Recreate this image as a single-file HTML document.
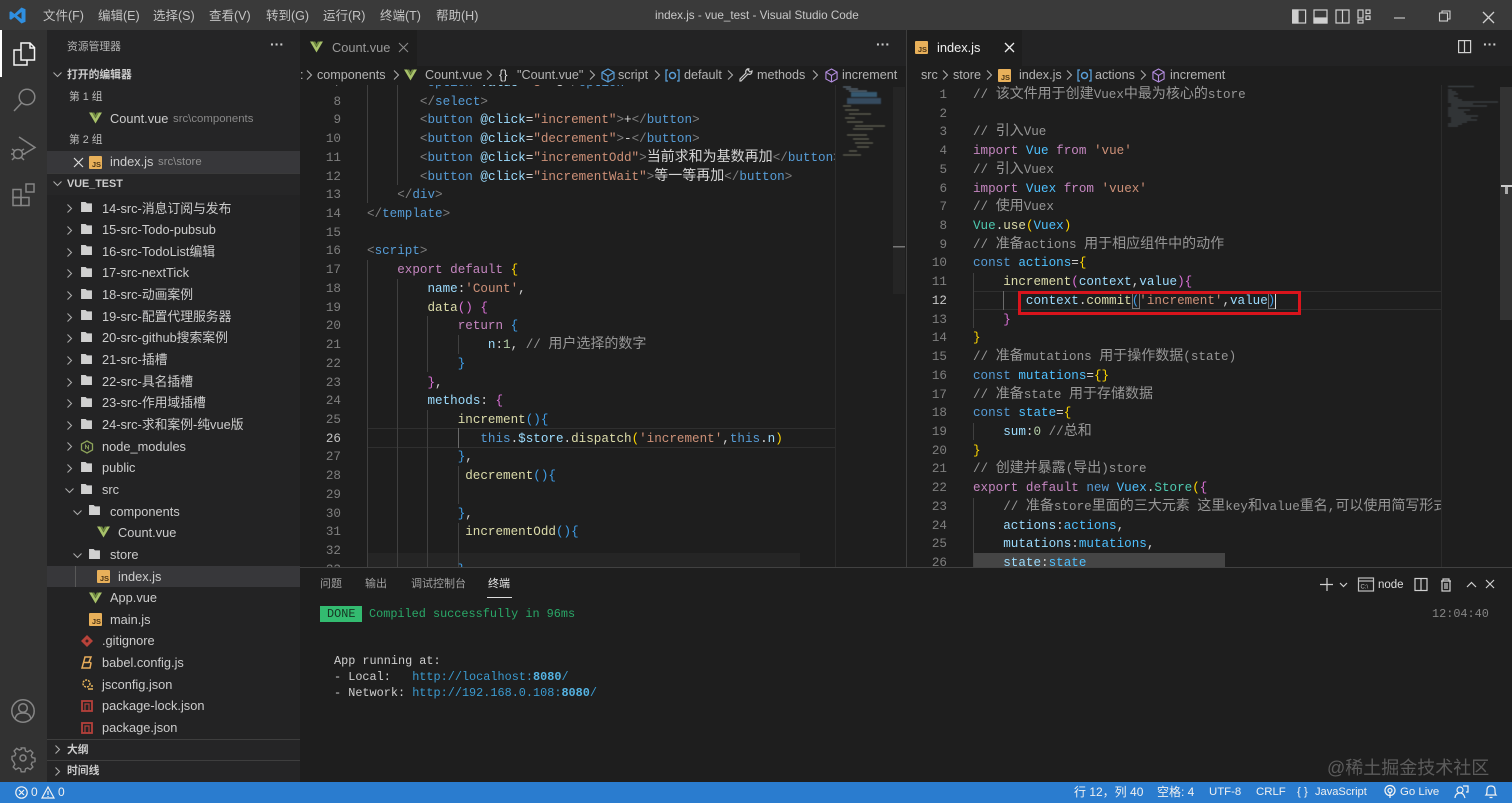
<!DOCTYPE html>
<html lang="zh-CN"><head><meta charset="utf-8"><title>index.js - vue_test - Visual Studio Code</title>
<style>
*{box-sizing:border-box;margin:0;padding:0}
html,body{width:1512px;height:803px;overflow:hidden;background:#1e1e1e}
body{position:relative;font-family:"Liberation Sans","Noto Sans CJK SC",sans-serif;color:#ccc;filter:blur(.3px)}
.a{position:absolute}
.t{position:absolute;white-space:pre;height:20px;line-height:20px;font-size:12.8px}
svg.i{position:absolute;overflow:visible}
.ic{fill:none;stroke:#858585;stroke-width:1.5}
.js{position:absolute;width:13px;height:13px;background:#e8b05a;border-radius:1px;color:#4b3415;font:bold 7.5px/17px "Liberation Sans",sans-serif;text-align:right;padding-right:1px;overflow:hidden}
.m{font-size:12.5px;color:#c4c4c4;top:6px}
.ti{color:#c8c8c8}
.code{position:absolute;overflow:hidden;font-family:"Liberation Mono","Noto Sans CJK SC",monospace;font-size:12.6px;line-height:18.72px;color:#d4d4d4}
.code div{height:18.72px;white-space:pre}
.code i{font-style:normal;font-size:14px;line-height:1px;font-family:"Noto Sans CJK SC",sans-serif}
.nums{position:absolute;font-family:"Liberation Mono",monospace;font-size:12.6px;line-height:18.72px;text-align:right;color:#7f7f7f;white-space:pre;overflow:hidden}
.g{color:#808080}.b{color:#569cd6}.at{color:#9cdcfe}.s{color:#ce9178}.k{color:#c586c0}.f{color:#dcdcaa}.c{color:#979797}.n{color:#b5cea8}.y{color:#ffd700}.p{color:#da70d6}.u{color:#3f9ee8}.v{color:#4ec9b0}.w{color:#d4d4d4}.cv{color:#4fc1ff}
.gd{position:absolute;width:1px;background:#404040}
.cr{position:absolute;fill:none;stroke:#aaa;stroke-width:1.1;overflow:visible}
.bc{color:#b4b4b4;top:65px;font-size:12.6px}
.st{top:782px;color:#f0f0f0;font-size:11.4px;line-height:21px;height:21px}
.pt{top:574px;font-size:11px;color:#a0a0a0}
.tm{position:absolute;font-family:"Liberation Mono",monospace;font-size:11.85px;line-height:16px;white-space:pre;color:#cfcfcf}
</style></head><body>
<svg width="0" height="0" style="position:absolute"><defs>
<symbol id="vue" viewBox="0 0 14 13"><path d="M0 .5h3.4L7 7l3.6-6.5H14L7 12.5z" fill="#a8c26a"/><path d="M3.6.5h2L7 3.2 8.4.5h2L7 6.6z" fill="#6f8b3e"/></symbol>
<symbol id="fo" viewBox="0 0 12 11"><path d="M0 0h5L6.500 1.500H12V11H0z" fill="#d0d0d0"/></symbol>
<symbol id="cube" viewBox="0 0 14 16"><path d="M7 1l6 3.3v7.4L7 15l-6-3.3V4.3zM1 4.3L7 8l6-3.7M7 8v7" fill="none" stroke="#b48ee0" stroke-width="1.2"/></symbol>
<symbol id="cb" viewBox="0 0 15 13"><path d="M3 1H1v11h2M12 1h2v11h-2" fill="none" stroke="#5a9fd8" stroke-width="1.3"/><circle cx="7.5" cy="6.5" r="3" fill="none" stroke="#5a9fd8" stroke-width="1.5"/></symbol>
</defs></svg>

<!-- title bar -->
<div class="a" style="left:0;top:0;width:1512px;height:30px;background:#3a3a3a"></div>
<svg class="i" style="left:9px;top:7px" width="17" height="17" viewBox="0 0 17 17"><path d="M12.5 0.5L16.5 2.3V14.7L12.5 16.5 5.5 10 2 12.8 .5 12V5L2 4.2 5.5 7zM12.5 5L8 8.5l4.5 3.5z" fill="#2f8fe0" fill-rule="evenodd"/></svg>
<div class="t m" style="left:43px">文件(F)</div><div class="t m" style="left:98px">编辑(E)</div><div class="t m" style="left:153px">选择(S)</div><div class="t m" style="left:209px">查看(V)</div><div class="t m" style="left:266px">转到(G)</div><div class="t m" style="left:323px">运行(R)</div><div class="t m" style="left:380px">终端(T)</div><div class="t m" style="left:436px">帮助(H)</div>
<div class="t ti" style="left:655px;top:6px;font-size:11.7px">index.js - vue_test - Visual Studio Code</div>
<svg class="i" style="left:1292px;top:9px" width="80" height="15" fill="none" stroke="#cfcfcf" stroke-width="1.2"><rect x=".6" y="1" width="13" height="13"/><rect x="1" y="1" width="5" height="13" fill="#cfcfcf"/><rect x="22" y="1" width="13" height="13"/><rect x="22" y="9" width="13" height="5" fill="#cfcfcf"/><rect x="44" y="1" width="13" height="13"/><path d="M50.5 1v13"/><rect x="66" y="1" width="5" height="8"/><rect x="74" y="1" width="4" height="3.5"/><rect x="74" y="7" width="4" height="3.5"/><rect x="66" y="11" width="5" height="3"/></svg>
<svg class="i" style="left:1394px;top:10px" width="100" height="14" fill="none" stroke="#d0d0d0" stroke-width="1.1"><path d="M0 8h11"/><rect x="45.5" y="3" width="8" height="8"/><path d="M48 3V1h8v8h-2.500"/><path d="M89 2l11 11M100 2L89 13" stroke-width="1.3"/></svg>

<!-- activity bar -->
<div class="a" style="left:0;top:30px;width:47px;height:752px;background:#323232"></div>
<div class="a" style="left:0;top:30px;width:2px;height:47px;background:#fff"></div>
<svg class="i" style="left:12px;top:42px" width="24" height="24" fill="none" stroke="#f5f5f5" stroke-width="1.500"><path d="M9 1h9l4.500 4.500V18H9zM18 1v5h4.500"/><path d="M9 8H2v15h13v-5"/></svg>
<svg class="i ic" style="left:12px;top:88px" width="24" height="24"><circle cx="15" cy="9" r="7.800"/><path d="M10 14.500L2 23"/></svg>
<svg class="i ic" style="left:11px;top:135px" width="26" height="26"><path d="M8 2l16 10.500L13 19"/><circle cx="7" cy="19" r="4.500"/><path d="M1 14l3 2M13 14l-3 2M0 19h2.500M12 19h2.500M1 25l3-3M13 25l-3-3"/></svg>
<svg class="i ic" style="left:12px;top:183px" width="24" height="24"><rect x="1" y="6.500" width="8" height="8"/><rect x="1" y="14.500" width="8" height="8"/><rect x="9" y="14.500" width="8" height="8"/><rect x="14" y="1" width="8" height="8"/></svg>
<svg class="i ic" style="left:11px;top:699px" width="24" height="24"><circle cx="12" cy="12" r="11.200"/><circle cx="12" cy="9" r="4.300"/><path d="M4 20c1-5 4-6 8-6s7 1 8 6"/></svg>
<svg class="i ic" style="left:11px;top:746px" width="24" height="24"><circle cx="12" cy="12" r="3"/><path d="M10 1h4l.7 3.300 2.300 1 2.900-1.800 2.800 2.800-1.800 2.900 1 2.300 3.100.7v3.600l-3.100.7-1 2.300 1.800 2.900-2.800 2.800-2.900-1.800-2.300 1-.7 3.300h-4l-.7-3.300-2.300-1-2.900 1.800-2.800-2.800 1.800-2.900-1-2.300L0 13.800v-3.600l3.100-.7 1-2.300L2.300 4.300 5.100 1.500 8 3.300l2.300-1z" transform="translate(1 1) scale(.92)"/></svg>

<!-- sidebar -->
<div class="a" style="left:47px;top:30px;width:253px;height:752px;background:#232324"></div>
<div class="a" style="left:47px;top:30px;width:253px;height:143px;background:#252526"></div>
<div class="t" style="left:67px;top:37px;font-size:10.8px;color:#b5b5b5">资源管理器</div>
<div class="t" style="left:270px;top:34px;font-size:14px;color:#ccc;font-weight:bold">···</div>
<svg class="cr" style="left:53px;top:72px" width="9" height="6"><path d="M.5.500l4 4 4-4"/></svg>
<div class="t" style="left:67px;top:65px;font-size:10.8px;font-weight:bold;color:#ccc">打开的编辑器</div>
<div class="t" style="left:69px;top:87px;font-size:10.8px;color:#bbb">第 1 组</div>
<svg class="i" style="left:89px;top:112px" width="13" height="12"><use href="#vue"/></svg>
<div class="t" style="left:110px;top:109px">Count.vue</div><div class="t" style="left:173px;top:109px;font-size:11.4px;color:#888">src\components</div>
<div class="t" style="left:69px;top:130px;font-size:10.8px;color:#bbb">第 2 组</div>
<div class="a" style="left:47px;top:151px;width:253px;height:22px;background:#37373a"></div>
<svg class="i" style="left:74px;top:158px" width="9" height="9" stroke="#ddd" stroke-width="1.200"><path d="M0 0l9 9M9 0L0 9"/></svg>
<span class="js" style="left:89px;top:156px">JS</span>
<div class="t" style="left:110px;top:152px">index.js</div><div class="t" style="left:158px;top:152px;font-size:11.4px;color:#8f8f8f">src\store</div>
<div class="a" style="left:47px;top:173px;width:253px;height:22px;background:#262627;border-top:1px solid #3a3a3a"></div>
<svg class="cr" style="left:53px;top:181px" width="9" height="6"><path d="M.5.500l4 4 4-4"/></svg>
<div class="t" style="left:67px;top:174px;font-size:10.8px;font-weight:bold;color:#ccc">VUE_TEST</div>

<svg class="cr" style="left:67px;top:204px" width="6" height="9"><path d="M.5.500l4 4-4 4"/></svg><svg class="i" style="left:81px;top:202px" width="11" height="10"><use href="#fo"/></svg><div class="t" style="left:102px;top:199px">14-src-消息订阅与发布</div>
<svg class="cr" style="left:67px;top:226px" width="6" height="9"><path d="M.5.500l4 4-4 4"/></svg><svg class="i" style="left:81px;top:224px" width="11" height="10"><use href="#fo"/></svg><div class="t" style="left:102px;top:220px">15-src-Todo-pubsub</div>
<svg class="cr" style="left:67px;top:248px" width="6" height="9"><path d="M.5.500l4 4-4 4"/></svg><svg class="i" style="left:81px;top:245px" width="11" height="10"><use href="#fo"/></svg><div class="t" style="left:102px;top:242px">16-src-TodoList编辑</div>
<svg class="cr" style="left:67px;top:269px" width="6" height="9"><path d="M.5.500l4 4-4 4"/></svg><svg class="i" style="left:81px;top:267px" width="11" height="10"><use href="#fo"/></svg><div class="t" style="left:102px;top:263px">17-src-nextTick</div>
<svg class="cr" style="left:67px;top:291px" width="6" height="9"><path d="M.5.500l4 4-4 4"/></svg><svg class="i" style="left:81px;top:289px" width="11" height="10"><use href="#fo"/></svg><div class="t" style="left:102px;top:285px">18-src-动画案例</div>
<svg class="cr" style="left:67px;top:313px" width="6" height="9"><path d="M.5.500l4 4-4 4"/></svg><svg class="i" style="left:81px;top:310px" width="11" height="10"><use href="#fo"/></svg><div class="t" style="left:102px;top:307px">19-src-配置代理服务器</div>
<svg class="cr" style="left:67px;top:334px" width="6" height="9"><path d="M.5.500l4 4-4 4"/></svg><svg class="i" style="left:81px;top:332px" width="11" height="10"><use href="#fo"/></svg><div class="t" style="left:102px;top:328px">20-src-github搜索案例</div>
<svg class="cr" style="left:67px;top:356px" width="6" height="9"><path d="M.5.500l4 4-4 4"/></svg><svg class="i" style="left:81px;top:354px" width="11" height="10"><use href="#fo"/></svg><div class="t" style="left:102px;top:350px">21-src-插槽</div>
<svg class="cr" style="left:67px;top:378px" width="6" height="9"><path d="M.5.500l4 4-4 4"/></svg><svg class="i" style="left:81px;top:375px" width="11" height="10"><use href="#fo"/></svg><div class="t" style="left:102px;top:372px">22-src-具名插槽</div>
<svg class="cr" style="left:67px;top:399px" width="6" height="9"><path d="M.5.500l4 4-4 4"/></svg><svg class="i" style="left:81px;top:397px" width="11" height="10"><use href="#fo"/></svg><div class="t" style="left:102px;top:393px">23-src-作用域插槽</div>
<svg class="cr" style="left:67px;top:421px" width="6" height="9"><path d="M.5.500l4 4-4 4"/></svg><svg class="i" style="left:81px;top:419px" width="11" height="10"><use href="#fo"/></svg><div class="t" style="left:102px;top:415px">24-src-求和案例-纯vue版</div>
<svg class="cr" style="left:67px;top:442px" width="6" height="9"><path d="M.5.500l4 4-4 4"/></svg><svg class="i" style="left:81px;top:440px" width="12" height="13" fill="none" stroke="#8da35a" stroke-width="1.300"><path d="M6 1l5.500 3v6L6 13 .5 10V4z"/><path d="M4.500 9V5l3 4V5" stroke-width=".9"/></svg><div class="t" style="left:102px;top:437px">node_modules</div>
<svg class="cr" style="left:67px;top:464px" width="6" height="9"><path d="M.5.500l4 4-4 4"/></svg><svg class="i" style="left:81px;top:462px" width="11" height="10"><use href="#fo"/></svg><div class="t" style="left:102px;top:458px">public</div>
<svg class="cr" style="left:65px;top:488px" width="9" height="6"><path d="M.5.500l4 4 4-4"/></svg><svg class="i" style="left:81px;top:484px" width="11" height="10"><use href="#fo"/></svg><div class="t" style="left:102px;top:480px">src</div>
<svg class="cr" style="left:73px;top:510px" width="9" height="6"><path d="M.5.500l4 4 4-4"/></svg><svg class="i" style="left:89px;top:505px" width="11" height="10"><use href="#fo"/></svg><div class="t" style="left:110px;top:502px">components</div>
<svg class="i" style="left:97px;top:526px" width="13" height="12"><use href="#vue"/></svg><div class="t" style="left:118px;top:523px">Count.vue</div>
<svg class="cr" style="left:73px;top:553px" width="9" height="6"><path d="M.5.500l4 4 4-4"/></svg><svg class="i" style="left:89px;top:549px" width="11" height="10"><use href="#fo"/></svg><div class="t" style="left:110px;top:545px">store</div>
<div class="a" style="left:47px;top:566px;width:253px;height:21px;background:#37373a"></div>
<div class="gd" style="left:75px;top:566px;height:21px;background:#585858"></div>
<span class="js" style="left:97px;top:570px">JS</span><div class="t" style="left:118px;top:567px">index.js</div>
<svg class="i" style="left:89px;top:592px" width="13" height="12"><use href="#vue"/></svg><div class="t" style="left:110px;top:588px">App.vue</div>
<span class="js" style="left:89px;top:613px">JS</span><div class="t" style="left:110px;top:610px">main.js</div>
<svg class="i" style="left:81px;top:635px" width="12" height="12"><path d="M6 0l6 6-6 6-6-6z" fill="#b8433a"/><circle cx="6" cy="6" r="1.500" fill="#3a2020"/></svg><div class="t" style="left:102px;top:631px">.gitignore</div>
<svg class="i" style="left:81px;top:656px" width="12" height="14" fill="none" stroke="#e8ad5b" stroke-width="1.500"><path d="M4 1h6L8 6l2 1-1 5H1zM2.500 6.500H8"/></svg><div class="t" style="left:102px;top:653px">babel.config.js</div>
<svg class="i" style="left:81px;top:678px" width="13" height="13" fill="none" stroke="#e8b65c" stroke-width="1.500"><circle cx="5.500" cy="5.500" r="3.500" stroke-dasharray="2 1"/><path d="M7 11h5M10 8h2"/></svg><div class="t" style="left:102px;top:675px">jsconfig.json</div>
<svg class="i" style="left:81px;top:700px" width="12" height="12" fill="none" stroke="#b5403b" stroke-width="1.800"><rect x="1" y="1" width="10" height="10"/><path d="M4 11V4h4v7" stroke-width="1.200"/></svg><div class="t" style="left:102px;top:696px">package-lock.json</div>
<svg class="i" style="left:81px;top:722px" width="12" height="12" fill="none" stroke="#b5403b" stroke-width="1.800"><rect x="1" y="1" width="10" height="10"/><path d="M4 11V4h4v7" stroke-width="1.200"/></svg><div class="t" style="left:102px;top:718px">package.json</div>
<div class="a" style="left:47px;top:739px;width:253px;height:22px;background:#252526;border-top:1px solid #3e3e3e"></div>
<div class="a" style="left:47px;top:760px;width:253px;height:22px;background:#252526;border-top:1px solid #3e3e3e"></div>
<svg class="cr" style="left:55px;top:745px" width="6" height="9"><path d="M.5.500l4 4-4 4"/></svg><div class="t" style="left:67px;top:740px;font-size:10.8px;font-weight:bold">大纲</div>
<svg class="cr" style="left:55px;top:767px" width="6" height="9"><path d="M.5.500l4 4-4 4"/></svg><div class="t" style="left:67px;top:761px;font-size:10.8px;font-weight:bold">时间线</div>

<!-- left editor -->
<div class="a" style="left:300px;top:30px;width:606px;height:537px;background:#1e1e1e"></div>
<div class="a" style="left:300px;top:30px;width:606px;height:36px;background:#232324"></div>
<div class="a" style="left:300px;top:30px;width:117px;height:36px;background:#1e1e1e"></div>
<svg class="i" style="left:310px;top:41px" width="13" height="12"><use href="#vue"/></svg>
<div class="t" style="left:332px;top:38px;color:#9a9a9a">Count.vue</div>
<svg class="i" style="left:399px;top:43px" width="9" height="9" stroke="#8a8a8a" stroke-width="1.100"><path d="M0 0l9 9M9 0L0 9"/></svg>
<div class="t" style="left:876px;top:34px;font-size:14px;font-weight:bold;color:#ccc">···</div>
<div class="nums" style="left:300px;top:85px;width:41px;height:482px"><div style="margin-top:-11px">7
8
9
10
11
12
13
14
15
16
17
18
19
20
21
22
23
24
25
<span style="color:#c6c6c6">26</span>
27
28
29
30
31
32
33</div></div>
<div class="a" style="left:367px;top:428px;width:468px;height:20px;border-top:1px solid #2f2f2f;border-bottom:1px solid #2f2f2f"></div>
<div class="a" style="left:367px;top:553px;width:433px;height:14px;background:#252525"></div>
<div class="gd" style="left:367px;top:85px;height:118px"></div><div class="gd" style="left:397px;top:85px;height:100px"></div>
<div class="gd" style="left:367px;top:260px;height:307px"></div><div class="gd" style="left:397px;top:279px;height:288px"></div><div class="gd" style="left:427px;top:316px;height:56px"></div><div class="gd" style="left:458px;top:335px;height:19px"></div><div class="gd" style="left:427px;top:410px;height:157px"></div><div class="gd" style="left:458px;top:428px;height:20px;background:#6a6a6a"></div><div class="gd" style="left:458px;top:466px;height:38px"></div><div class="gd" style="left:458px;top:523px;height:44px"></div>
<div class="code" style="left:367px;top:85px;width:468px;height:482px"><div style="margin-top:-11px"><span class="g">       &lt;</span><span class="b">option</span> <span class="at">value</span>=<span class="s">"3"</span><span class="g">&gt;</span>3<span class="g">&lt;/</span><span class="b">option</span><span class="g">&gt;</span></div>
<div><span class="g">       &lt;/</span><span class="b">select</span><span class="g">&gt;</span></div>
<div><span class="g">       &lt;</span><span class="b">button</span> <span class="at">@click</span>=<span class="s">"increment"</span><span class="g">&gt;</span>+<span class="g">&lt;/</span><span class="b">button</span><span class="g">&gt;</span></div>
<div><span class="g">       &lt;</span><span class="b">button</span> <span class="at">@click</span>=<span class="s">"decrement"</span><span class="g">&gt;</span>-<span class="g">&lt;/</span><span class="b">button</span><span class="g">&gt;</span></div>
<div><span class="g">       &lt;</span><span class="b">button</span> <span class="at">@click</span>=<span class="s">"incrementOdd"</span><span class="g">&gt;</span><i>当前求和为基数再加</i><span class="g">&lt;/</span><span class="b">button</span><span class="g">&gt;</span></div>
<div><span class="g">       &lt;</span><span class="b">button</span> <span class="at">@click</span>=<span class="s">"incrementWait"</span><span class="g">&gt;</span><i>等一等再加</i><span class="g">&lt;/</span><span class="b">button</span><span class="g">&gt;</span></div>
<div><span class="g">    &lt;/</span><span class="b">div</span><span class="g">&gt;</span></div>
<div><span class="g">&lt;/</span><span class="b">template</span><span class="g">&gt;</span></div>
<div> </div>
<div><span class="g">&lt;</span><span class="b">script</span><span class="g">&gt;</span></div>
<div>    <span class="k">export default</span> <span class="y">{</span></div>
<div>        <span class="at">name</span>:<span class="s">'Count'</span>,</div>
<div>        <span class="f">data</span><span class="p">()</span> <span class="p">{</span></div>
<div>            <span class="k">return</span> <span class="u">{</span></div>
<div>                <span class="at">n</span>:<span class="n">1</span>, <span class="c">// <i>用户选择的数字</i></span></div>
<div>            <span class="u">}</span></div>
<div>        <span class="p">}</span>,</div>
<div>        <span class="at">methods</span>: <span class="p">{</span></div>
<div>            <span class="f">increment</span><span class="u">(){</span></div>
<div>               <span class="b">this</span>.<span class="at">$store</span>.<span class="f">dispatch</span><span class="y">(</span><span class="s">'increment'</span>,<span class="b">this</span>.<span class="at">n</span><span class="y">)</span></div>
<div>            <span class="u">}</span>,</div>
<div>             <span class="f">decrement</span><span class="u">(){</span></div>
<div> </div>
<div>            <span class="u">}</span>,</div>
<div>             <span class="f">incrementOdd</span><span class="u">(){</span></div>
<div> </div>
<div>            <span class="u">}</span>,</div></div>
<!-- left minimap -->
<svg class="i" style="left:835px;top:85px" width="71" height="482"><rect x="0" y="0" width="1" height="482" fill="#2b2b2b"/><g opacity=".75" style="filter:blur(.5px)"><path d="M8 2h8M11 4h12M14 6h18" stroke="#7f9ab0" stroke-width="1"/><rect x="16" y="7" width="26" height="5" fill="#3e6c8c"/><rect x="12" y="13" width="34" height="6" fill="#3f5a75"/><path d="M8 21h8M10 25h14M14 29h22M10 33h10M12 37h16M20 41h30M18 44h20M12 50h20M18 54h16M20 58h18M22 62h12M14 66h8M8 70h18" stroke="#8e8f76" stroke-width="1"/></g><rect x="58" y="2" width="12" height="207" fill="#252525"/><rect x="58" y="161" width="12" height="1.500" fill="#777"/></svg>

<!-- right editor -->
<div class="a" style="left:906px;top:30px;width:1px;height:537px;background:#3d3d3d"></div>
<div class="a" style="left:907px;top:30px;width:605px;height:537px;background:#1e1e1e"></div>
<div class="a" style="left:907px;top:30px;width:605px;height:36px;background:#232324"></div>
<div class="a" style="left:907px;top:30px;width:115px;height:36px;background:#1e1e1e"></div>
<span class="js" style="left:915px;top:41px">JS</span>
<div class="t" style="left:937px;top:38px;color:#f0f0f0">index.js</div>
<svg class="i" style="left:1005px;top:43px" width="9" height="9" stroke="#eee" stroke-width="1.300"><path d="M0 0l9 9M9 0L0 9"/></svg>
<svg class="i" style="left:1458px;top:40px" width="13" height="13" fill="none" stroke="#d0d0d0" stroke-width="1.200"><rect x=".6" y=".6" width="12" height="12"/><path d="M6.500 .6v12"/></svg>
<div class="t" style="left:1483px;top:34px;font-size:14px;font-weight:bold;color:#ccc">···</div>
<div class="nums" style="left:907px;top:85px;width:40px;height:482px"><div style="margin-top:1px">1
2
3
4
5
6
7
8
9
10
11
<span style="color:#c6c6c6">12</span>
13
14
15
16
17
18
19
20
21
22
23
24
25
26</div></div>
<div class="a" style="left:973px;top:291px;width:468px;height:19px;border-top:1px solid #2f2f2f;border-bottom:1px solid #2f2f2f"></div>
<div class="a" style="left:973px;top:553px;width:252px;height:14px;background:#454545"></div>
<div class="gd" style="left:973px;top:273px;height:55px"></div><div class="gd" style="left:1003px;top:291px;height:19px;background:#6a6a6a"></div><div class="gd" style="left:973px;top:423px;height:17px"></div><div class="gd" style="left:973px;top:498px;height:69px"></div>
<div class="a" style="left:1132px;top:292px;width:8px;height:17px;border:1px solid #777"></div>
<div class="a" style="left:1268px;top:292px;width:8px;height:17px;border:1px solid #777"></div>
<div class="code" style="left:973px;top:85px;width:468px;height:482px"><div style="margin-top:1px"><span class="c">// <i>该文件用于创建</i>Vuex<i>中最为核心的</i>store</span></div>
<div> </div>
<div><span class="c">// <i>引入</i>Vue</span></div>
<div><span class="k">import</span> <span class="cv">Vue</span> <span class="k">from</span> <span class="s">'vue'</span></div>
<div><span class="c">// <i>引入</i>Vuex</span></div>
<div><span class="k">import</span> <span class="cv">Vuex</span> <span class="k">from</span> <span class="s">'vuex'</span></div>
<div><span class="c">// <i>使用</i>Vuex</span></div>
<div><span class="v">Vue</span>.<span class="f">use</span><span class="y">(</span><span class="cv">Vuex</span><span class="y">)</span></div>
<div><span class="c">// <i>准备</i>actions <i>用于相应组件中的动作</i></span></div>
<div><span class="b">const</span> <span class="cv">actions</span>=<span class="y">{</span></div>
<div>    <span class="f">increment</span><span class="p">(</span><span class="at">context</span>,<span class="at">value</span><span class="p">){</span></div>
<div>       <span class="at">context</span>.<span class="f">commit</span><span class="u">(</span><span class="s">'increment'</span>,<span class="at">value</span><span class="u">)</span></div>
<div>    <span class="p">}</span></div>
<div><span class="y">}</span></div>
<div><span class="c">// <i>准备</i>mutations <i>用于操作数据</i>(state)</span></div>
<div><span class="b">const</span> <span class="cv">mutations</span>=<span class="y">{}</span></div>
<div><span class="c">// <i>准备</i>state <i>用于存储数据</i></span></div>
<div><span class="b">const</span> <span class="cv">state</span>=<span class="y">{</span></div>
<div>    <span class="at">sum</span>:<span class="n">0</span> <span class="c">//<i>总和</i></span></div>
<div><span class="y">}</span></div>
<div><span class="c">// <i>创建并暴露</i>(<i>导出</i>)store</span></div>
<div><span class="k">export default</span> <span class="b">new</span> <span class="cv">Vuex</span>.<span class="v">Store</span><span class="y">(</span><span class="p">{</span></div>
<div>    <span class="c">// <i>准备</i>store<i>里面的三大元素</i> <i>这里</i>key<i>和</i>value<i>重名</i>,<i>可以使用简写形式</i></span></div>
<div>    <span class="at">actions</span>:<span class="cv">actions</span>,</div>
<div>    <span class="at">mutations</span>:<span class="cv">mutations</span>,</div>
<div>    <span class="at">state</span>:<span class="cv">state</span></div></div>
<div class="a" style="left:1275px;top:292px;width:1px;height:17px;background:#ddd"></div>
<div class="a" style="left:1018px;top:291px;width:283px;height:24px;border:3px solid #d9141c"></div>
<svg class="i" style="left:1441px;top:85px" width="71" height="482"><rect x="0" y="0" width="1" height="482" fill="#2b2b2b"/><g opacity=".55" style="filter:blur(.4px)"><path d="M7 1.500h26M7 5h4M7 7h8M7 9h10M7 11h6M7 13h10M7 15h14M7 17h50M10 19h22M10 21h36M7 23h10M7 25h22M7 27h16M7 29h18M7 31h30M10 33h20M10 35h26M10 37h16M7 39h14M7 41h10" stroke="#7c8a96" stroke-width=".8"/></g><rect x="59" y="2" width="12" height="233" fill="#333"/><rect x="60" y="100" width="11" height="2" fill="#ccc"/><rect x="64" y="102" width="3" height="7" fill="#aaa"/></svg>

<!-- breadcrumbs left -->
<svg class="cr" style="left:0;top:0;stroke:#aaa" width="1512" height="90"><path d="M307 70.500l4.500 4.500-4.500 4.500M394 70.500l4.500 4.500-4.500 4.500M487 70.500l4.500 4.500-4.500 4.500M590 70.500l4.500 4.500-4.500 4.500M655 70.500l4.500 4.500-4.500 4.500M728 70.500l4.500 4.500-4.500 4.500M813 70.500l4.500 4.500-4.500 4.500M943 70.500l4.500 4.500-4.500 4.500M987 70.500l4.500 4.500-4.500 4.500M1067 70.500l4.500 4.500-4.500 4.500M1141 70.500l4.500 4.500-4.500 4.500"/></svg>
<div class="t bc" style="left:300px">:</div>
<div class="t bc" style="left:317px">components</div>
<svg class="i" style="left:404px;top:69px" width="13" height="12"><use href="#vue"/></svg>
<div class="t bc" style="left:425px">Count.vue</div>
<div class="t bc" style="left:499px;color:#ddd">{}</div>
<div class="t bc" style="left:517px">"Count.vue"</div>
<svg class="i" style="left:601px;top:68px" width="14" height="15" fill="none" stroke="#5a9fd8" stroke-width="1.200"><path d="M7 1l6 3.300v6.400L7 14l-6-3.300V4.300zM1 4.300L7 8l6-3.700M7 8v6"/></svg>
<div class="t bc" style="left:618px">script</div>
<svg class="i" style="left:665px;top:69px" width="15" height="13"><use href="#cb"/></svg>
<div class="t bc" style="left:684px">default</div>
<svg class="i" style="left:739px;top:68px" width="14" height="14" fill="none" stroke="#ccc" stroke-width="1.200"><path d="M1 13l1 0 7-7c2 1 4 0 4-3l-2 1-2-2 1-1C8 0 6 3 7 5L1 11z"/></svg>
<div class="t bc" style="left:757px">methods</div>
<svg class="i" style="left:825px;top:68px" width="13" height="15"><use href="#cube"/></svg>
<div class="t bc" style="left:842px">increment</div>
<!-- breadcrumbs right -->
<div class="t bc" style="left:921px">src</div>
<div class="t bc" style="left:953px">store</div>
<span class="js" style="left:998px;top:69px">JS</span>
<div class="t bc" style="left:1019px">index.js</div>
<svg class="i" style="left:1077px;top:69px" width="15" height="13"><use href="#cb"/></svg>
<div class="t bc" style="left:1095px">actions</div>
<svg class="i" style="left:1152px;top:68px" width="13" height="15"><use href="#cube"/></svg>
<div class="t bc" style="left:1170px">increment</div>

<!-- panel -->
<div class="a" style="left:300px;top:567px;width:1212px;height:215px;background:#1e1e1e;border-top:1px solid #414141"></div>
<div class="t pt" style="left:320px">问题</div><div class="t pt" style="left:365px">输出</div><div class="t pt" style="left:411px">调试控制台</div><div class="t pt" style="left:488px;color:#e8e8e8">终端</div>
<div class="a" style="left:487px;top:597px;width:25px;height:1px;background:#ddd"></div>
<svg class="i" style="left:1320px;top:577px" width="170" height="16" fill="none" stroke="#d0d0d0" stroke-width="1.200"><path d="M7 1v13M0 7.500h13M20 6l3.500 3.500L27 6"/><rect x="38.500" y="1" width="15" height="13" stroke="#c0c0c0"/><path d="M38.500 4h15" stroke="#c0c0c0"/><text x="40.500" y="11.500" font-family="Liberation Sans" font-size="6" fill="#c0c0c0" stroke="none">C:\</text><rect x="95" y="1.500" width="12" height="12"/><path d="M101 1.500v12"/><path d="M121 4h10M123 4V2h6v2M122 4v10h8V4M125 6v6M127 6v6"/><path d="M147 10l4.500-4.500L156 10M166 3l8 8M174 3l-8 8"/></svg>
<div class="t" style="left:1378px;top:575px;font-size:11.500px;color:#ddd">node</div>
<div class="a" style="left:320px;top:606px;width:42px;height:16px;background:#33bb70"></div>
<div class="tm" style="left:327px;top:606px;color:#173322">DONE</div>
<div class="tm" style="left:369px;top:606px;color:#2aa868">Compiled successfully in 96ms</div>
<div class="tm" style="left:1432px;top:606px;color:#858585">12:04:40</div>
<div class="tm" style="left:334px;top:653px">App running at:
- Local:   <span style="color:#3b9bd0">http://localhost:</span><b style="color:#55b4e4">8080</b><span style="color:#3b9bd0">/</span>
- Network: <span style="color:#3b9bd0">http://192.168.0.108:</span><b style="color:#55b4e4">8080</b><span style="color:#3b9bd0">/</span></div>
<div class="t" style="left:1327px;top:758px;font-size:18px;color:#5c5c5c">@稀土掘金技术社区</div>

<!-- status bar -->
<div class="a" style="left:0;top:782px;width:1512px;height:21px;background:#2a7ccf"></div>
<svg class="i" style="left:15px;top:786px" width="40" height="13" fill="none" stroke="#f2f2f2" stroke-width="1.200"><circle cx="6.500" cy="6.500" r="5.700"/><path d="M4 4l5 5M9 4l-5 5"/><path d="M33 1l6 11H27zM33 5v4M33 10v1"/></svg>
<div class="t st" style="left:31px;font-size:12px">0</div><div class="t st" style="left:58px;font-size:12px">0</div>
<div class="t st" style="left:1074px;font-size:12px">行 12，列 40</div><div class="t st" style="left:1157px;font-size:12px">空格: 4</div><div class="t st" style="left:1209px">UTF-8</div><div class="t st" style="left:1256px">CRLF</div><div class="t st" style="left:1297px">{ }</div><div class="t st" style="left:1315px;font-size:11.1px">JavaScript</div>
<svg class="i" style="left:1384px;top:785px" width="12" height="14" fill="none" stroke="#f2f2f2" stroke-width="1.300"><circle cx="6" cy="5.500" r="5"/><circle cx="6" cy="5.500" r="2"/><path d="M6 8v5"/></svg>
<div class="t st" style="left:1400px">Go Live</div>
<svg class="i" style="left:1455px;top:785px" width="14" height="14" fill="none" stroke="#f2f2f2" stroke-width="1.200"><circle cx="5" cy="5" r="3"/><path d="M0 13c0-3 2-5 5-5s4 2 5 5M8 1h5v6h-2"/></svg>
<svg class="i" style="left:1485px;top:785px" width="12" height="14" fill="none" stroke="#f2f2f2" stroke-width="1.200"><path d="M1 10c1-1 1-2 1-5 0-3 2-4 4-4s4 1 4 4c0 3 0 4 1 5zM4.500 12.500h3"/></svg>
</body></html>
